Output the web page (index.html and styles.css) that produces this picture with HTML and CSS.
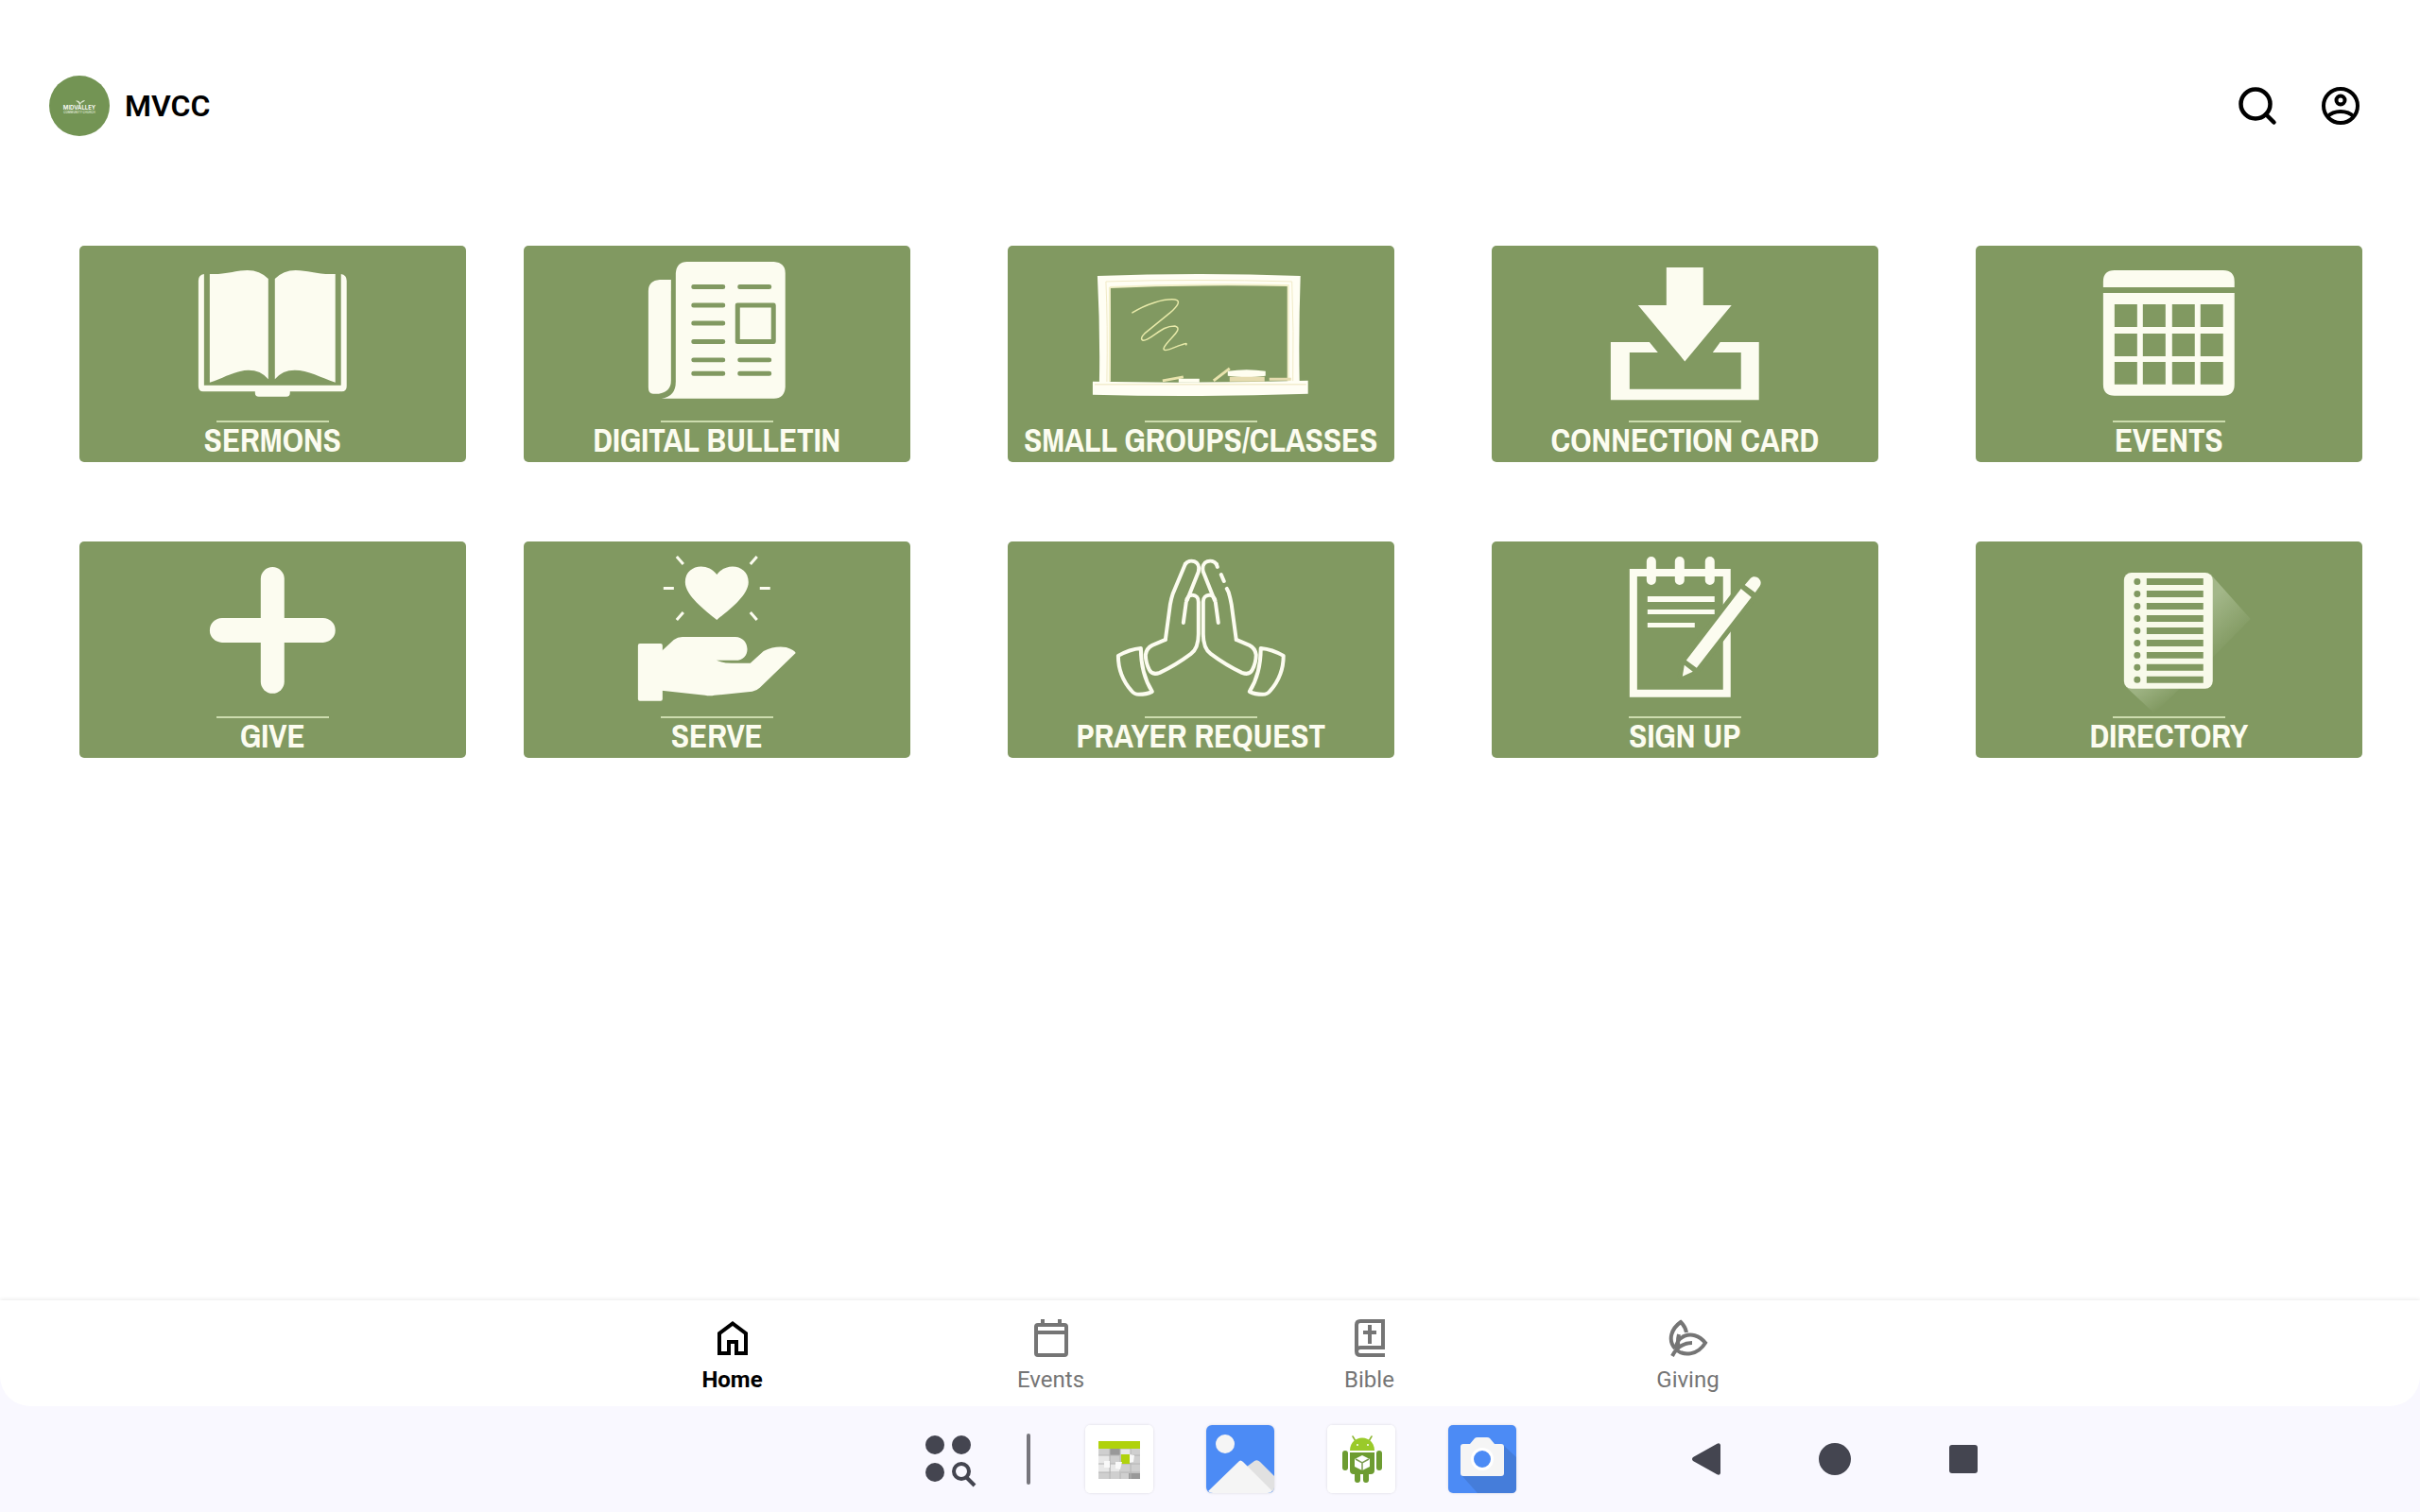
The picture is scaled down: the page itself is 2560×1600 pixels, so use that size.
FILE: index.html
```html
<!DOCTYPE html>
<html lang="en">
<head>
<meta charset="utf-8">
<meta name="viewport" content="width=device-width, initial-scale=1">
<title>MVCC</title>
<link rel="stylesheet" href="styles.css">
</head>
<body>
<div class="app">
  <header class="header">
    <svg class="logo" viewBox="0 0 64 64" role="img" aria-label="MidValley Community Church">
      <circle cx="32" cy="32" r="32" fill="#739454"/>
      <path d="M32 31c-1-3-3-4-4-4 2-1 4 0 5 2 1-2 3-3 5-3-1 2-3 2-4 3-1 1-1 2-2 2z" fill="#dfe8d3"/>
      <text class="logo-name" x="32" y="36" text-anchor="middle">MIDVALLEY</text>
      <text class="logo-sub" x="32" y="40" text-anchor="middle">COMMUNITY CHURCH</text>
    </svg>
    <h1 class="title">MVCC</h1>
    <button class="icon-button" aria-label="Search">
      <svg viewBox="0 0 40 40" fill="none" stroke="#000" stroke-width="4.500" stroke-linecap="round"><circle cx="18" cy="18" r="15.500"/><path d="M29 29 37.500 37.500"/></svg>
    </button>
    <button class="icon-button" aria-label="Account">
      <svg viewBox="0 0 40 40" fill="none" stroke="#000" stroke-width="4"><circle cx="20" cy="20" r="18"/><circle cx="20" cy="14" r="4.500"/><path d="M6 31.500C13 24 27 24 34 31.500"/></svg>
    </button>
  </header>

  <main class="tiles">
    <a class="tile" href="#sermons">
      <svg class="art" viewBox="0 0 409 185" fill="#fcfcf0">
        <path d="M132 30Q126 31 126 37V149Q126 154.500 131 154.500H186V156Q186 160 190 160H219Q223 160 223 156V154.500H278Q283 154.500 283 149V37Q283 31 277 30V148H132Z"/>
        <path d="M138 30C156 31 164 26 178 26Q191 26 200 35V141.500Q192 132 179 132C166 132 153 140 138 145Z"/>
        <path d="M271 30C253 31 242 26 229 26Q216 26 207 35V141.500Q215 132 228 132C242 132 256 140 271 145Z"/>
      </svg>
      <span class="rule"></span><span class="label">SERMONS</span>
    </a>
    <a class="tile" href="#bulletin">
      <svg class="art" viewBox="0 0 409 185" fill="#fcfcf0">
        <path d="M156 36H144Q132 37 132 48V150Q132 157 137 157H143Q156 155 156 143Z"/>
        <path d="M173 17H265Q277 18 277 29V150Q276 162 265 162H146Q161 160 161 144V29Q162 17 173 17Z"/>
        <g fill="none" stroke="#819961" stroke-width="5" stroke-linecap="round" stroke-linejoin="round">
          <path d="M180 43.500H211M180 63H211M180 82H211M180 101.500H211M180 121H211M180 135.500H211M229 43.500H260M229 121H260M229 135.500H260"/>
          <path d="M226.500 63H264.500V101.500H226.500Z"/>
        </g>
      </svg>
      <span class="rule"></span><span class="label">DIGITAL BULLETIN</span>
    </a>
    <a class="tile" href="#groups">
      <svg class="art" viewBox="0 0 409 185" fill="#fffef4">
        <path fill-rule="evenodd" d="M95 32Q200 28 310 32Q308 90 309 145H97Q98 90 95 32ZM108 44Q110 90 108 145H297V42Q200 40 108 44Z"/>
        <path fill="none" stroke="#f1eac6" d="M105 145Q106 80 104 38Q200 35 301 38Q303 90 302 145"/>
        <path fill="none" stroke="#f3f0cb" stroke-width="2" d="M108 44Q200 40 297 42V144M108 44V144"/>
        <path d="M90 144Q200 146 318 143V157Q200 161 90 158Z"/>
        <path fill="none" stroke="#ede3bb" d="M92 147H316"/>
        <path fill="none" stroke="#e8eaa9" stroke-width="1.500" stroke-linecap="round" d="M132 71C146 62 165 56 177 57C184 58 180 64 172 71L145 93C139 99 142 102 148 99C158 94 164 85 177 85C187 88 171 98 166 107C162 114 174 109 181 106Q191 102 189 105"/>
        <path fill="none" stroke="#e9e3ad" stroke-width="3" d="M164 143 186 139M218 143 235 130"/>
        <path fill="#fffef0" d="M181 141H203V145H181ZM233 133Q253 130 273 133V138Q253 141 233 138Z"/>
        <path fill="#e6dcb0" d="M235 139H272V144H235ZM277 140H300V143H277Z"/>
      </svg>
      <span class="rule"></span><span class="label">SMALL GROUPS/CLASSES</span>
    </a>
    <a class="tile" href="#connect">
      <svg class="art" viewBox="0 0 409 185" fill="#fcfcf0">
        <path d="M185 23H224V63H254L204.500 122.500 155 63H185Z"/>
        <path d="M126 102H167L176 113H146V152H264V113H234L242 102H283V163.500H126Z"/>
      </svg>
      <span class="rule"></span><span class="label">CONNECTION CARD</span>
    </a>
    <a class="tile" href="#events">
      <svg class="art" viewBox="0 0 409 185" fill="#fcfcf0">
        <path d="M135 44V38Q135 26 147 26H262Q274 26 274 38V44Z"/>
        <path fill-rule="evenodd" d="M135 50H274V147Q274 159 262 159H147Q135 159 135 147ZM147 62V86H171V62ZM177 62V86H201V62ZM208 62V86H232V62ZM238 62V86H262V62ZM147 93V117H171V93ZM177 93V117H201V93ZM208 93V117H232V93ZM238 93V117H262V93ZM147 123V147H171V123ZM177 123V147H201V123ZM208 123V147H232V123ZM238 123V147H262V123Z"/>
      </svg>
      <span class="rule"></span><span class="label">EVENTS</span>
    </a>
    <a class="tile" href="#give">
      <svg class="art" viewBox="0 0 409 185" fill="#fcfcf0">
        <rect x="138" y="81" width="133" height="26" rx="13"/>
        <rect x="192" y="27" width="25" height="134" rx="12.500"/>
      </svg>
      <span class="rule"></span><span class="label">GIVE</span>
    </a>
    <a class="tile" href="#serve">
      <svg class="art" viewBox="0 0 409 185" fill="#fcfcf0">
        <path d="M204.500 83C192 73 171 57 171 43C171 25 194 21 204.500 35C215 21 238 25 238 43C238 57 217 73 204.500 83Z"/>
        <path fill="none" stroke="#fcfcf0" stroke-width="3" d="M162 16 169 24M247 16 240 24M148 49.500H159M250 49.500H261M169 75 162 83M240 75 247 83"/>
        <rect x="121" y="108" width="26" height="61" rx="2"/>
        <path d="M146 116 159 104Q163 101 168 101H224C240 101 242 126 224 126H204Q212 129 220 129H240L254 116Q266 110 278 112 287 115 288 118L250 155Q247 158 242 159L202 163Q197 164 192 163L146 158Z"/>
      </svg>
      <span class="rule"></span><span class="label">SERVE</span>
    </a>
    <a class="tile" href="#prayer">
      <svg class="art" viewBox="0 0 409 185" fill="none" stroke="#fcfcf0" stroke-width="4" stroke-linecap="round" stroke-linejoin="round">
        <g id="hand">
          <path d="M186 86 189 64C190 54 202 55 202 64V98Q202 113 194 119Q178 131 161 139Q153 142 150 136Q146 128 146 120Q147 113 153 110L167 104"/>
          <path d="M190 62 202 32C205 20 192 18 188 24"/>
          <path d="M117 121Q129 114 141 113 141 140 153 159 147 162 139 162 134 162 131 158 117 142 117 121Z"/>
        </g>
        <use href="#hand" transform="matrix(-1 0 0 1 409 0)"/>
        <path d="M188 24 175 55Q173 61 172 67L167 104M221 24 222 27M226 35 229 42M232 50 234 54Q236 61 237 67L242 104"/>
      </svg>
      <span class="rule"></span><span class="label">PRAYER REQUEST</span>
    </a>
    <a class="tile" href="#signup">
      <svg class="art" viewBox="0 0 409 185" fill="#fcfcf0">
        <path fill-rule="evenodd" d="M146 29H253V165H146ZM154 37V157H245V37Z"/>
        <path fill="none" stroke="#fcfcf0" stroke-width="10" stroke-linecap="round" d="M169 21V41M199 21V41M231 21V41"/>
        <path d="M165 58H236V64H165ZM165 72H236V77H165ZM165 86H215V91H165Z"/>
        <path fill="#819961" stroke="#819961" stroke-width="10" stroke-linejoin="round" d="M264 50 275 59 217 134 202 143 206 126Z"/>
        <path d="M264 50 275 59 217 134 206 126ZM204 131 213 138 202 143ZM268 46 274 39C279 34 288 41 284 47L279 54Z"/>
      </svg>
      <span class="rule"></span><span class="label">SIGN UP</span>
    </a>
    <a class="tile" href="#directory">
      <svg class="art" viewBox="0 0 409 185" fill="#f8faea">
        <defs>
          <linearGradient id="shade-r" gradientUnits="userSpaceOnUse" x1="251" y1="60" x2="286" y2="98"><stop offset="0" stop-color="#a3b789"/><stop offset="1" stop-color="#819961"/></linearGradient>
          <linearGradient id="shade-b" gradientUnits="userSpaceOnUse" x1="178" y1="154" x2="194" y2="178"><stop offset="0" stop-color="#9db282"/><stop offset="1" stop-color="#819961"/></linearGradient>
        </defs>
        <path fill="url(#shade-r)" d="M249 35 291 82 249 125Z"/>
        <path fill="url(#shade-b)" d="M159 154 189 182 218 154Z"/>
        <rect x="157" y="33" width="94" height="123" rx="8"/>
        <path fill="none" stroke="#819961" stroke-width="7" d="M181 42.500H241M181 55.500H241M181 68.500H241M181 81.500H241M181 94.500H241M181 107.500H241M181 120.500H241M181 133.500H241M181 146.500H241"/>
        <path fill="none" stroke="#819961" stroke-width="7" stroke-linecap="round" stroke-dasharray="0 13" d="M171 42.500V147"/>
      </svg>
      <span class="rule"></span><span class="label">DIRECTORY</span>
    </a>
  </main>

  <nav class="tabs" aria-label="Main">
    <a class="tab tab-active" href="#home" aria-current="page">
      <svg viewBox="0 0 24 24" fill="currentColor"><path d="M6 19h3v-6h6v6h3v-9l-6-4.500L6 10v9zm-2 2V9l8-6 8 6v12h-7v-6h-2v6H4z"/></svg>
      Home
    </a>
    <a class="tab" href="#calendar">
      <svg viewBox="0 0 24 24" fill="none" stroke="currentColor" stroke-width="2"><rect x="4" y="5" width="16" height="16" rx="1"/><path d="M4 9H20M7.500 2V5M16.500 2V5"/></svg>
      Events
    </a>
    <a class="tab" href="#bible">
      <svg viewBox="0 0 24 24" fill="none" stroke="currentColor" stroke-width="2"><path d="M20 21H7Q5 21 5 19V5Q5 3 7 3H19V17H7Q5 17 5 19M12 5V15M8.500 9H15.500"/></svg>
      Bible
    </a>
    <a class="tab" href="#giving">
      <svg viewBox="0 0 24 24" fill="none" stroke="currentColor" stroke-width="2"><path d="M5 17.500C1 13 3 7 8 3.500Q10.500 6 11 9M3.500 21.500Q7 14.500 14 14.500M7 10Q6 14 7 17.500M6 18C4 12 14 6 21 14.500C17 21 10 21.500 6 18.500"/></svg>
      Giving
    </a>
  </nav>
</div>

<footer class="taskbar">
  <button class="launcher" aria-label="All apps">
    <svg viewBox="0 0 56 56"><g fill="#444550"><circle cx="13" cy="13" r="10"/><circle cx="41" cy="13" r="10"/><circle cx="13" cy="42" r="10"/></g><g fill="none" stroke="#444550" stroke-width="4"><circle cx="41" cy="41" r="8"/><path d="M46 47 55 56"/></g></svg>
  </button>
  <span class="divider"></span>
  <button class="app-icon" aria-label="Calendar">
    <svg viewBox="0 0 72 72"><rect width="72" height="72" rx="5" fill="#fff"/><path fill="#cfcfcf" d="M14 25H58V57H14Z"/><path fill="#e8e8e8" d="M14 32H26V50H14ZM36 26H48V33H36ZM27 41H38V51H27Z"/><path fill="#999" d="M26 25H37V32H26ZM46 51H58V57H46Z"/><path fill="none" stroke="#b4b4b4" d="M14 32H58M14 41H58M14 50H58M26 25V57M37 25V57M48 25V57"/><path fill="#b0d20c" d="M14 17H58V25H14ZM38 31H47V41H38Z"/><path fill="#f9f9f9" d="M47 31 52 32 51 39 47 40ZM20 38H26V45H20ZM32 39H39L37 47 32 46Z"/></svg>
  </button>
  <button class="app-icon" aria-label="Gallery">
    <svg viewBox="0 0 72 72"><rect width="72" height="72" rx="6" fill="#4c8bf5"/><circle cx="20" cy="20" r="10" fill="#f5f5f5"/><path d="M43 44 51 38Q54 36 57 39L72 54V66Q72 70 69 70Z" fill="#e1e1e1"/><path d="M2 70 34 39Q36 36 39 39L70 70Q68 72 65 72H7Q4 72 2 70Z" fill="#f5f5f5"/></svg>
  </button>
  <button class="app-icon" aria-label="Package installer">
    <svg viewBox="0 0 72 72"><rect width="72" height="72" rx="5" fill="#fff"/><path fill="none" stroke="#8bb52f" stroke-width="1.500" stroke-linecap="round" d="M27 12 30 17M47 12 44 17"/><path fill="#9aca2a" d="M24 27C24 9 50 9 50 27Z"/><path fill="#6d9c31" d="M24 29H50V48Q50 52 46 52H44V58Q44 61 41 61T38 58V52H35V58Q35 61 32 61T29 58V52H28Q24 52 24 48Z"/><rect x="16" y="27" width="6" height="21" rx="3" fill="#6d9c31"/><rect x="52" y="27" width="6" height="21" rx="3" fill="#6d9c31"/><circle cx="32" cy="21" r="1" fill="#fff"/><circle cx="43" cy="21" r="1" fill="#fff"/><path fill="#fff" d="M29 36 37 32 45 36V44L37 48 29 44Z"/><path fill="none" stroke="#7b9b52" stroke-width="1.500" d="M30 36 37 40 44 36M37 40V48"/></svg>
  </button>
  <button class="app-icon" aria-label="Camera">
    <svg viewBox="0 0 72 72"><rect width="72" height="72" rx="5" fill="#4c8bf5"/><path fill="#457dda" d="M58 21 72 34V67Q72 72 67 72H31L14 53Z"/><path fill="#f5f5f5" d="M16 20H23L28 14Q29 13 31 13H41Q43 13 44 14L49 20H56Q59 20 59 23V51Q59 54 56 54H16Q13 54 13 51V23Q13 20 16 20Z"/><circle cx="36" cy="36" r="10.500" fill="#4c8bf5" stroke="#fff" stroke-width="3"/></svg>
  </button>
  <div class="system">
    <button aria-label="Back"><svg viewBox="0 0 34 34" fill="#444550"><path d="M32 2V32Q31 35 28 33L3 19Q1 17 3 15L28 1Q31-1 32 2Z"/></svg></button>
    <button aria-label="Home"><svg viewBox="0 0 34 34" fill="#444550"><circle cx="17" cy="17" r="17"/></svg></button>
    <button aria-label="Recent apps"><svg viewBox="0 0 34 34" fill="#444550"><rect x="2" y="2" width="30" height="30" rx="3"/></svg></button>
  </div>
</footer>
</body>
</html>
```
FILE: styles.css
```css
* {
  box-sizing: border-box;
}

body {
  margin: 0;
  min-height: 100vh;
  display: flex;
  flex-direction: column;
  background: #f9f8ff;
  font-family: Roboto, "Liberation Sans", sans-serif;
}

button {
  display: flex;
  align-items: center;
  justify-content: center;
  padding: 0;
  border: 0;
  background: none;
  cursor: pointer;
}

a {
  color: inherit;
  text-decoration: none;
}

svg {
  display: block;
}

.app {
  flex: 1;
  display: flex;
  flex-direction: column;
  background: #fff;
  border-radius: 0 0 32px 32px;
  overflow: hidden;
}

.header {
  display: flex;
  align-items: center;
  padding: 80px 64px 0 52px;
}

.logo {
  width: 64px;
  height: 64px;
}

.logo-name {
  font: 600 6px Inter, sans-serif;
  fill: #fff;
}

.logo-sub {
  font: 600 3px Inter, sans-serif;
  fill: #dfe8d3;
}

.title {
  flex: 1;
  margin: 0 0 0 16px;
  font-size: 32px;
  line-height: 40px;
  font-weight: 600;
  color: #000;
}

.icon-button {
  width: 40px;
  height: 40px;
  margin-left: 48px;
}

.icon-button svg {
  width: 40px;
  height: 40px;
  overflow: visible;
}

.tiles {
  flex: 1;
  display: grid;
  grid-template-columns: repeat(5, 1fr);
  align-content: start;
  row-gap: 84px;
  padding: 116px 0 84px;
}

.tile {
  display: flex;
  flex-direction: column;
  align-items: center;
  width: calc(80% - 1px);
  margin-left: 42px;
  border-radius: 5px;
  background: #819961;
  color: #fcfcf0;
}

.tile:nth-child(5n + 1) {
  margin-left: 84px;
}

.art {
  width: 100%;
}

.rule {
  width: 119px;
  height: 2px;
  background: #ccdcae;
}

.label {
  padding-bottom: 4px;
  font-family: "Liberation Sans Narrow", "Archivo Narrow", "Roboto Condensed", "Liberation Sans", sans-serif;
  font-size: 35px;
  line-height: 38px;
  font-weight: 700;
  white-space: nowrap;
}

.tabs {
  display: flex;
  justify-content: center;
  padding: 16px 0 14px;
  box-shadow: 0 0 5px rgba(0, 0, 0, 0.12);
}

.tab {
  width: 337px;
  display: flex;
  flex-direction: column;
  align-items: center;
  gap: 6px;
  font-size: 24px;
  line-height: 28px;
  color: #757575;
}

.tab svg {
  width: 48px;
  height: 48px;
}

.tab-active {
  font-weight: 700;
  color: #000;
}

.taskbar {
  display: flex;
  align-items: center;
  height: 112px;
  padding-left: calc(50% - 304px);
}

.launcher svg {
  width: 56px;
  height: 56px;
  overflow: visible;
}

.divider {
  width: 4px;
  height: 54px;
  margin: 0 2px 0 54px;
  border-radius: 2px;
  background: #77767d;
}

.app-icon {
  margin-left: 56px;
  border-radius: 6px;
  box-shadow: 0 0 3px rgba(0, 0, 0, 0.14);
}

.app-icon svg {
  width: 72px;
  height: 72px;
}

.system {
  display: flex;
  margin-left: 133px;
}

.system button {
  width: 136px;
  height: 72px;
}

.system svg {
  width: 34px;
  height: 34px;
}
```
